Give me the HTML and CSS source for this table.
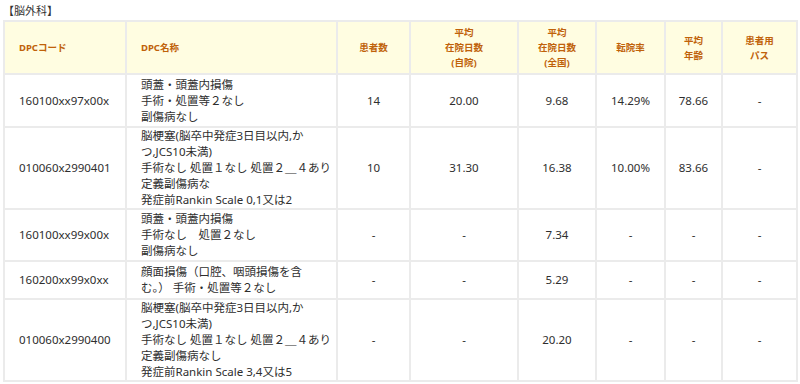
FILE: index.html
```html
<!DOCTYPE html>
<html lang="ja">
<head>
<meta charset="utf-8">
<link rel="stylesheet" href="styles.css">
</head>
<body>
<div class="page">
  <p class="title">【脳外科】</p>
  <table class="dpc">
    <colgroup>
      <col class="c1"><col class="c2"><col class="c3"><col class="c4"><col class="c5"><col class="c6"><col class="c7"><col class="c8">
    </colgroup>
    <thead>
      <tr>
        <th class="left">DPCコード</th>
        <th class="left">DPC名称</th>
        <th>患者数</th>
        <th>平均<br>在院日数<br>(自院)</th>
        <th>平均<br>在院日数<br>(全国)</th>
        <th>転院率</th>
        <th>平均<br>年齢</th>
        <th>患者用<br>パス</th>
      </tr>
    </thead>
    <tbody>
      <tr class="r1">
        <td class="left">160100xx97x00x</td>
        <td class="left">頭蓋・頭蓋内損傷<br>手術・処置等２なし<br>副傷病なし</td>
        <td>14</td><td>20.00</td><td>9.68</td><td>14.29%</td><td>78.66</td><td>-</td>
      </tr>
      <tr class="r2">
        <td class="left">010060x2990401</td>
        <td class="left">脳梗塞(脳卒中発症3日目以内,か<br>つ,JCS10未満)<br>手術なし 処置１なし 処置２＿４あり<br>定義副傷病な<br>発症前Rankin Scale 0,1又は2</td>
        <td>10</td><td>31.30</td><td>16.38</td><td>10.00%</td><td>83.66</td><td>-</td>
      </tr>
      <tr class="r3">
        <td class="left">160100xx99x00x</td>
        <td class="left">頭蓋・頭蓋内損傷<br>手術なし　処置２なし<br>副傷病なし</td>
        <td>-</td><td>-</td><td>7.34</td><td>-</td><td>-</td><td>-</td>
      </tr>
      <tr class="r4">
        <td class="left">160200xx99x0xx</td>
        <td class="left">顔面損傷（口腔、咽頭損傷を含<br>む。） 手術・処置等２なし</td>
        <td>-</td><td>-</td><td>5.29</td><td>-</td><td>-</td><td>-</td>
      </tr>
      <tr class="r5">
        <td class="left">010060x2990400</td>
        <td class="left">脳梗塞(脳卒中発症3日目以内,か<br>つ,JCS10未満)<br>手術なし 処置１なし 処置２＿４あり<br>定義副傷病なし<br>発症前Rankin Scale 3,4又は5</td>
        <td>-</td><td>-</td><td>20.20</td><td>-</td><td>-</td><td>-</td>
      </tr>
    </tbody>
  </table>
</div>
</body>
</html>
```
FILE: styles.css
```css
html, body {
  margin: 0;
  padding: 0;
  background: #ffffff;
}
.page {
  padding: 2px 3px 0 3px;
  font-family: "Noto Sans", "Noto Sans CJK JP", sans-serif;
  color: #333333;
}
.title {
  margin: 0;
  font-size: 11px;
  line-height: 17px;
  height: 18px;
}
.dpc {
  border-collapse: collapse;
  table-layout: fixed;
  width: 793px;
  font-size: 11.5px;
  line-height: 16px;
  border-top: 2px solid #ebebeb;
}
.dpc col.c1 { width: 122px; }
.dpc col.c2 { width: 211px; }
.dpc col.c3 { width: 73px; }
.dpc col.c4 { width: 108px; }
.dpc col.c5 { width: 78px; }
.dpc col.c6 { width: 69px; }
.dpc col.c7 { width: 57px; }
.dpc col.c8 { width: 75px; }
.dpc th, .dpc td {
  border: 2px solid #ebebeb;
  padding: 0 4px;
  text-align: center;
  vertical-align: middle;
}
.dpc th {
  background: #fffde1;
  color: #c0620a;
  font-size: 9.5px;
  font-weight: bold;
  line-height: 15px;
  height: 51px;
}
.dpc .left {
  text-align: left;
  padding-left: 14px;
  white-space: nowrap;
}
.dpc td {
  color: #2e2e2e;
}
.dpc tr.r1 td { height: 51px; }
.dpc tr.r2 td { height: 80px; }
.dpc tr.r3 td { height: 50px; }
.dpc tr.r4 td { height: 36px; }
.dpc tr.r5 td { height: 80px; }
```
